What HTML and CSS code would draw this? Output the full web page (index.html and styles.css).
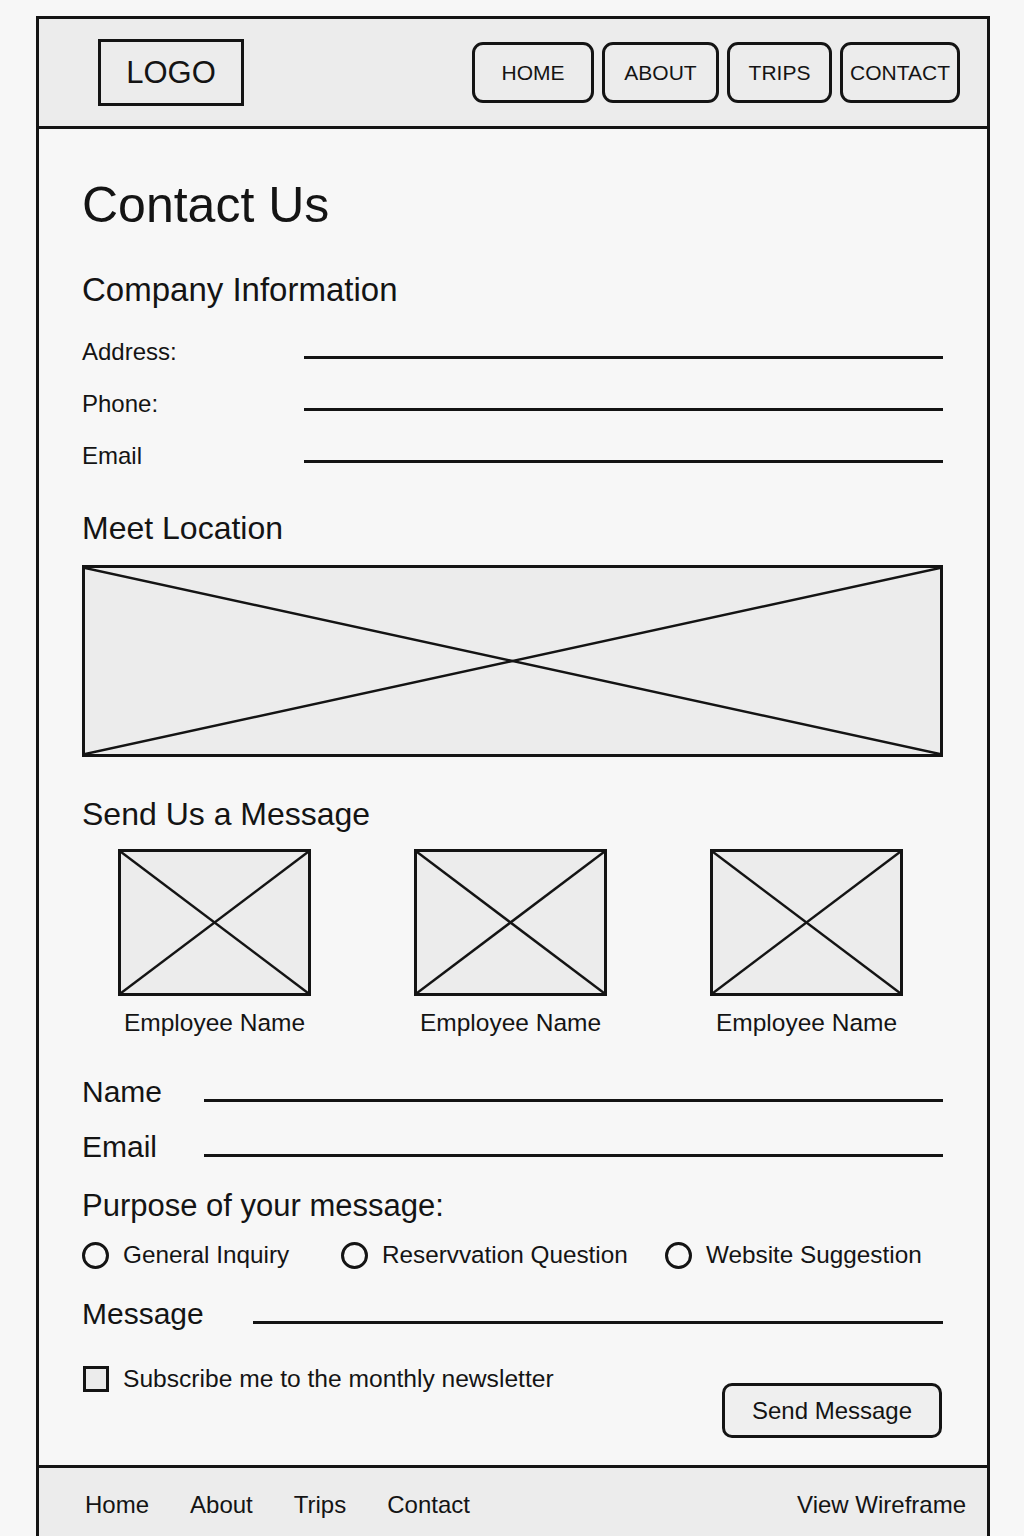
FILE: index.html
```html
<!DOCTYPE html>
<html>
	<head>
		<meta charset="UTF-8">
		<title>Contact Us</title>
		<link rel="stylesheet" href="styles.css">
	</head>
	<body>
		<div class="page">
			<header class="top">
				<div class="logo">LOGO</div>
				<nav class="nav">
					<a href="##">HOME</a>
					<a href="##">ABOUT</a>
					<a href="##">TRIPS</a>
					<a href="##">CONTACT</a>
				</nav>
			</header>

			<div class="content">
				<h1>Contact Us</h1>

				<h2 class="title title-company">Company Information</h2>
				<div class="info">
					<div class="info-row">
						<label for="address">Address:</label>
						<input type="text" id="address">
					</div>
					<div class="info-row">
						<label for="phone">Phone:</label>
						<input type="text" id="phone">
					</div>
					<div class="info-row">
						<label for="mail">Email</label>
						<input type="text" id="mail">
					</div>
				</div>

				<h2 class="title title-meet">Meet Location</h2>
				<div class="map">
					<svg viewBox="0 0 100 100" preserveAspectRatio="none">
						<line x1="0" y1="0" x2="100" y2="100"/>
						<line x1="100" y1="0" x2="0" y2="100"/>
					</svg>
				</div>

				<h2 class="title title-send">Send Us a Message</h2>
				<div class="staff">
					<div class="person">
						<div class="photo">
							<svg viewBox="0 0 100 100" preserveAspectRatio="none">
								<line x1="0" y1="0" x2="100" y2="100"/>
								<line x1="100" y1="0" x2="0" y2="100"/>
							</svg>
						</div>
						<p>Employee Name</p>
					</div>
					<div class="person">
						<div class="photo">
							<svg viewBox="0 0 100 100" preserveAspectRatio="none">
								<line x1="0" y1="0" x2="100" y2="100"/>
								<line x1="100" y1="0" x2="0" y2="100"/>
							</svg>
						</div>
						<p>Employee Name</p>
					</div>
					<div class="person">
						<div class="photo">
							<svg viewBox="0 0 100 100" preserveAspectRatio="none">
								<line x1="0" y1="0" x2="100" y2="100"/>
								<line x1="100" y1="0" x2="0" y2="100"/>
							</svg>
						</div>
						<p>Employee Name</p>
					</div>
				</div>

				<div class="fields">
					<div class="field">
						<label for="name">Name</label>
						<input type="text" id="name">
					</div>
					<div class="field">
						<label for="email">Email</label>
						<input type="text" id="email">
					</div>
				</div>

				<h3 class="purpose">Purpose of your message:</h3>
				<div class="radios">
					<label class="radio"><input type="radio" name="purpose">General Inquiry</label>
					<label class="radio"><input type="radio" name="purpose">Reservvation Question</label>
					<label class="radio"><input type="radio" name="purpose">Website Suggestion</label>
				</div>

				<div class="field field-message">
					<label for="message">Message</label>
					<input type="text" id="message">
				</div>

				<div class="send-row">
					<label class="check"><input type="checkbox">Subscribe me to the monthly newsletter</label>
					<button class="send">Send Message</button>
				</div>
			</div>

			<footer class="foot">
				<div class="foot-links">
					<a href="##">Home</a>
					<a href="##">About</a>
					<a href="##">Trips</a>
					<a href="##">Contact</a>
				</div>
				<a href="##">View Wireframe</a>
			</footer>
		</div>
	</body>
</html>
```
FILE: styles.css
```css
*{
	margin: 0;
	padding: 0;
	box-sizing: border-box;
}
body{
	background: #f7f7f7;
	color: #141414;
	font-family: "Liberation Sans", Arial, sans-serif;
}
a{
	color: inherit;
	text-decoration: none;
}
.page{
	width: 954px;
	margin: 16px 0 0 36px;
	border: 3px solid #141414;
	border-bottom: none;
}

/* header */
.top{
	height: 110px;
	display: flex;
	align-items: center;
	justify-content: space-between;
	padding: 0 27px 0 59px;
	background: #ececec;
	border-bottom: 3px solid #141414;
}
.logo{
	width: 146px;
	height: 67px;
	border: 3px solid #141414;
	display: flex;
	align-items: center;
	justify-content: center;
	font-size: 31px;
}
.nav{
	display: grid;
	grid-template-columns: 122px 117px 105px 120px;
	gap: 8px;
}
.nav a{
	height: 61px;
	border: 3px solid #141414;
	border-radius: 11px;
	display: flex;
	align-items: center;
	justify-content: center;
	font-size: 21px;
}

/* content */
.content{
	padding: 46px 44px 27px 43px;
}
h1{
	font-size: 50px;
	line-height: 60px;
	font-weight: normal;
}
.title{
	font-size: 32px;
	line-height: 40px;
	font-weight: normal;
}
.title-company{
	font-size: 33px;
	margin-top: 35px;
}
.title-meet{
	margin-top: 26px;
}
.title-send{
	margin-top: 37px;
}
input[type=text]{
	flex: 1;
	width: 0;
	border: none;
	border-bottom: 3px solid #141414;
	background: transparent;
	outline: none;
}
.info{
	margin-top: 16px;
}
.info-row{
	display: flex;
	align-items: flex-start;
	height: 52px;
}
.info-row label{
	width: 222px;
	font-size: 24px;
	line-height: 52px;
}
.info-row input{
	height: 33px;
}

.map{
	height: 192px;
	margin-top: 17px;
	border: 3px solid #141414;
	background: #ececec;
}
svg{
	display: block;
	width: 100%;
	height: 100%;
}
svg line{
	stroke: #141414;
	stroke-width: 2.5;
	vector-effect: non-scaling-stroke;
}

.staff{
	display: flex;
	gap: 103px;
	margin-top: 15px;
	padding-left: 36px;
}
.person{
	width: 193px;
	text-align: center;
}
.photo{
	height: 147px;
	border: 3px solid #141414;
	background: #ececec;
}
.person p{
	margin-top: 12px;
	font-size: 24.5px;
	line-height: 30px;
	white-space: nowrap;
}

.fields{
	margin-top: 26px;
}
.field{
	display: flex;
	align-items: flex-start;
	height: 55px;
}
.field label{
	width: 122px;
	font-size: 30px;
	line-height: 55px;
}
.field input{
	height: 38px;
}
.field-message{
	margin-top: 11px;
}
.field-message label{
	width: 171px;
}

.purpose{
	margin-top: 12px;
	font-size: 31px;
	line-height: 40px;
	font-weight: normal;
}
.radios{
	display: grid;
	grid-template-columns: 259px 324px auto;
	height: 40px;
	margin-top: 9px;
}
.radio{
	display: flex;
	align-items: center;
	font-size: 24.3px;
	white-space: nowrap;
}
.radio input{
	appearance: none;
	width: 27px;
	height: 27px;
	margin-right: 14px;
	border: 3px solid #141414;
	border-radius: 50%;
}

.send-row{
	display: flex;
	justify-content: space-between;
	align-items: flex-start;
	margin-top: 25px;
}
.check{
	display: flex;
	align-items: center;
	font-size: 24.6px;
	line-height: 26px;
	padding-left: 1px;
}
.check input{
	appearance: none;
	width: 26px;
	height: 26px;
	margin-right: 14px;
	border: 3px solid #141414;
	background: #ececec;
}
.send{
	width: 220px;
	height: 55px;
	margin: 17px 1px 0 0;
	border: 3px solid #141414;
	border-radius: 10px;
	background: #efefef;
	color: #141414;
	font-family: inherit;
	font-size: 24px;
}

/* footer */
.foot{
	display: flex;
	justify-content: space-between;
	padding: 22px 21px 40px 46px;
	background: #ececec;
	border-top: 3px solid #141414;
	font-size: 24px;
	line-height: 30px;
}
.foot-links{
	display: flex;
	gap: 41px;
}
```
